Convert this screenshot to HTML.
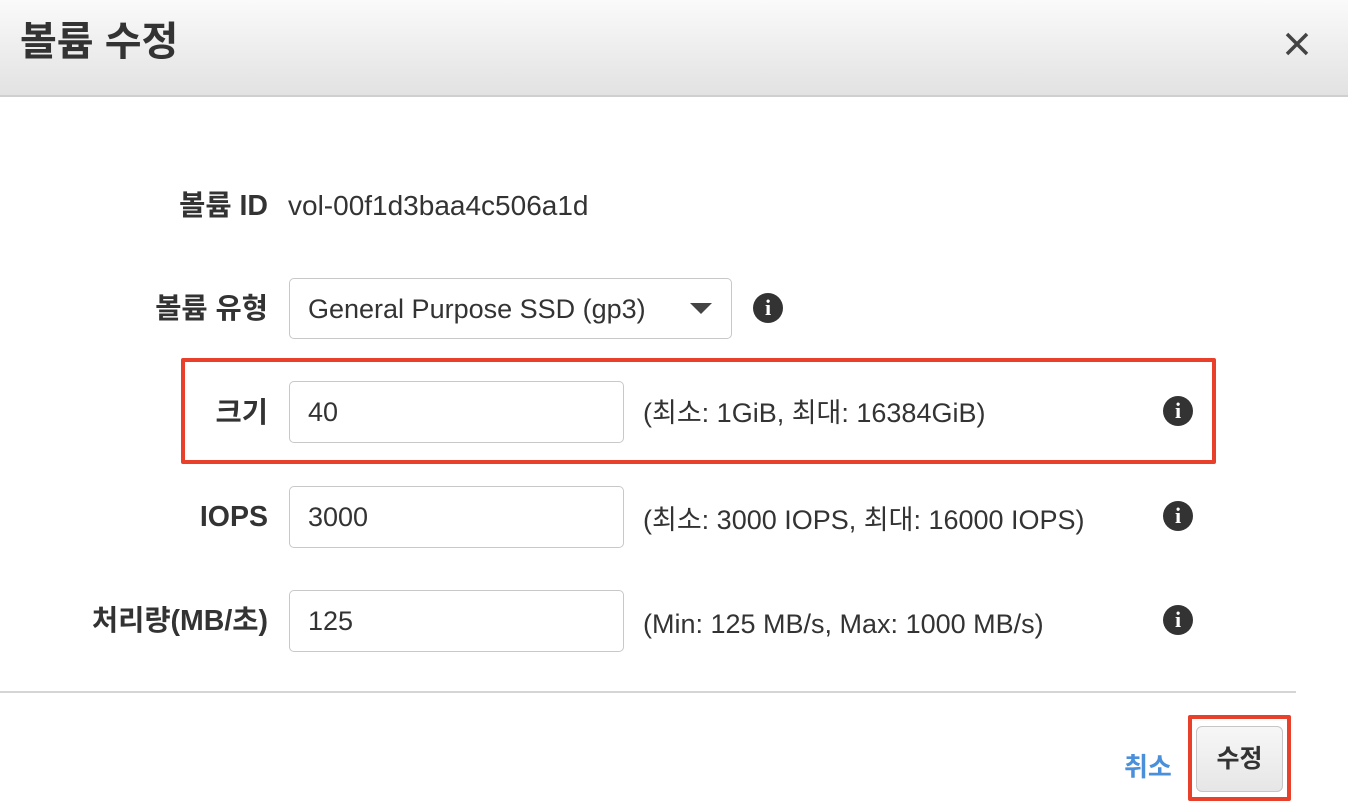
<!DOCTYPE html>
<html><head><meta charset="utf-8"><style>
body{margin:0;width:1348px;height:808px;background:#fff;font-family:"Liberation Sans","Noto Sans CJK KR",sans-serif;color:#333;position:relative;overflow:hidden}
.a{position:absolute}
.hdr{left:0;top:0;width:1348px;height:95px;background:linear-gradient(#fafafa,#e2e2e2);border-bottom:2px solid #cfcfcf}
.lbl{right:1080px;font-weight:bold;font-size:28.5px;text-align:right;white-space:nowrap;line-height:34px}
.box{border:1px solid #c8c8c8;border-radius:5px;box-sizing:border-box;font-size:27px;line-height:60px;padding-left:18px;color:#333;background:#fff}
.hint{left:643px;font-size:27px;line-height:30px;white-space:nowrap}
.info{width:30px;height:30px;border-radius:50%;background:#333;color:#fff;font-family:"Liberation Serif",serif;font-weight:bold;font-size:22px;line-height:30px;text-align:center}
.red{border:4px solid #e8402a;border-radius:2px;box-sizing:border-box}
</style></head><body>
<div class="a hdr"></div>
<div class="a" style="left:20px;top:15px;font-size:40px;font-weight:bold;line-height:54px;color:#333">볼륨 수정</div>
<svg class="a" style="left:1284px;top:31px" width="26" height="26" viewBox="0 0 26 26"><path d="M3 3L23 23M23 3L3 23" stroke="#444" stroke-width="3.5"/></svg>

<div class="a lbl" style="top:189px">볼륨 ID</div>
<div class="a" style="left:288px;top:189px;font-size:28px;line-height:34px">vol-00f1d3baa4c506a1d</div>

<div class="a lbl" style="top:292px">볼륨 유형</div>
<div class="a box" style="left:289px;top:278px;width:443px;height:61px">General Purpose SSD (gp3)</div>
<svg class="a" style="left:690px;top:303px" width="22" height="12"><path d="M0 0H22L11 11Z" fill="#444"/></svg>
<div class="a info" style="left:753px;top:293px">i</div>

<div class="a red" style="left:181px;top:358px;width:1035px;height:106px"></div>
<div class="a lbl" style="top:396px">크기</div>
<div class="a box" style="left:289px;top:381px;width:335px;height:62px">40</div>
<div class="a hint" style="top:398px">(최소: 1GiB, 최대: 16384GiB)</div>
<div class="a info" style="left:1163px;top:396px">i</div>

<div class="a lbl" style="top:500px">IOPS</div>
<div class="a box" style="left:289px;top:486px;width:335px;height:62px">3000</div>
<div class="a hint" style="top:505px">(최소: 3000 IOPS, 최대: 16000 IOPS)</div>
<div class="a info" style="left:1163px;top:501px">i</div>

<div class="a lbl" style="top:604px">처리량(MB/초)</div>
<div class="a box" style="left:289px;top:590px;width:335px;height:62px">125</div>
<div class="a hint" style="top:609px">(Min: 125 MB/s, Max: 1000 MB/s)</div>
<div class="a info" style="left:1163px;top:605px">i</div>

<div class="a" style="left:0;top:691px;width:1296px;height:2px;background:#d5d5d5"></div>
<div class="a" style="left:1124px;top:751px;font-size:26px;font-weight:bold;color:#4a8fd9;line-height:32px">취소</div>
<div class="a red" style="left:1188px;top:715px;width:103px;height:86px"></div>
<div class="a" style="left:1196px;top:726px;width:87px;height:66px;box-sizing:border-box;border:1px solid #c6c6c6;border-radius:6px;background:linear-gradient(#f7f7f7,#e6e6e6);font-size:25px;font-weight:bold;line-height:64px;text-align:center;color:#333">수정</div>
</body></html>
